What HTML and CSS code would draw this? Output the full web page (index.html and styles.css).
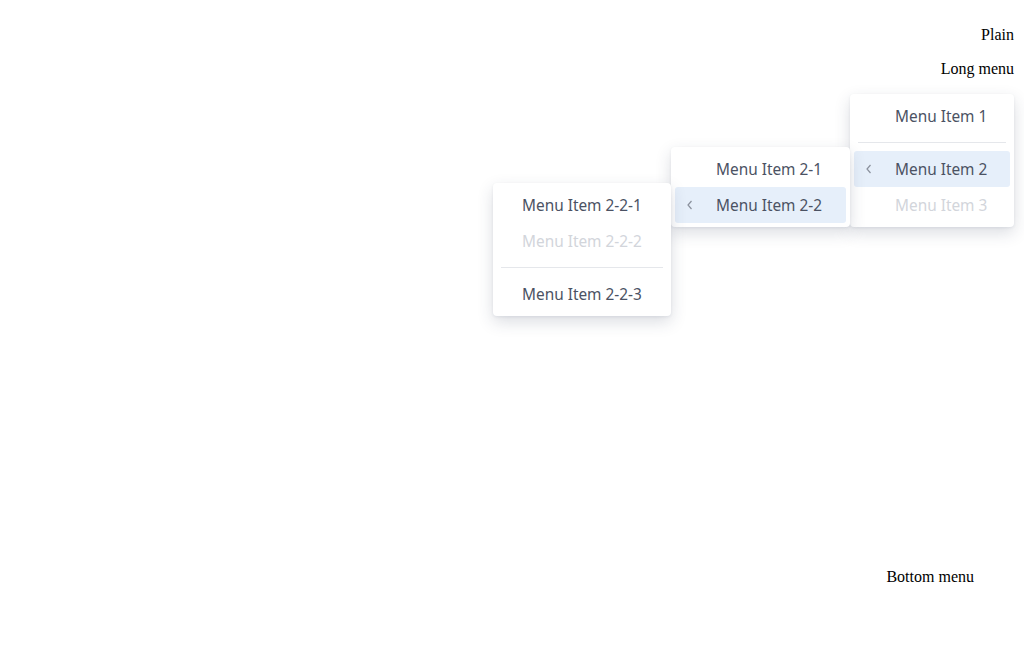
FILE: index.html
```html
<!DOCTYPE html>
<html>
<head>
<meta charset="utf-8">
<link rel="stylesheet" href="styles.css">
</head>
<body>
<div class="page">
  <div class="triggers">
    <div class="trigger trigger-plain">Plain</div>
    <div class="trigger trigger-long">Long menu</div>
  </div>
  <div class="bottom-row">
    <div class="trigger">Bottom menu</div>
  </div>
</div>

<div class="menu menu-1 has-sub">
  <div class="item">Menu Item 1</div>
  <div class="sep"></div>
  <div class="item active"><span class="chev"><svg width="8" height="10" viewBox="0 0 8 10"><path d="M5.5 1 L2 5 L5.5 9" fill="none" stroke="currentColor" stroke-width="1.2"/></svg></span>Menu Item 2</div>
  <div class="item disabled">Menu Item 3</div>
</div>

<div class="menu menu-2 has-sub">
  <div class="item">Menu Item 2-1</div>
  <div class="item active"><span class="chev"><svg width="8" height="10" viewBox="0 0 8 10"><path d="M5.5 1 L2 5 L5.5 9" fill="none" stroke="currentColor" stroke-width="1.2"/></svg></span>Menu Item 2-2</div>
</div>

<div class="menu menu-3">
  <div class="item">Menu Item 2-2-1</div>
  <div class="item disabled">Menu Item 2-2-2</div>
  <div class="sep"></div>
  <div class="item">Menu Item 2-2-3</div>
</div>
</body>
</html>
```

FILE: styles.css
```css
html, body {
  margin: 0;
  padding: 0;
  background: #fff;
}
body {
  font-family: "Liberation Serif", serif;
  font-size: 16px;
  color: #000;
}
.page {
  display: flex;
  flex-direction: column;
  height: 651px;
}
.triggers {
  display: flex;
  flex-direction: column;
  align-items: flex-end;
  padding: 26px 10px 0 0;
  gap: 16px;
}
.trigger {
  line-height: 18px;
}
.bottom-row {
  display: flex;
  justify-content: flex-end;
  padding: 0 50px 0 0;
  margin-top: 490px;
}
.menu {
  position: absolute;
  background: #fff;
  border-radius: 4px;
  padding: 4px;
  box-shadow: 0 6px 16px rgba(40, 55, 85, 0.17), 0 1px 3px rgba(40, 55, 85, 0.08);
  font-family: "Noto Sans", "Open Sans", sans-serif;
  font-size: 15.4px;
  color: #4b5263;
  display: flex;
  flex-direction: column;
}
.menu-1 { left: 850px; top: 94px; width: 156px; }
.menu-2 { left: 671px; top: 147px; width: 171px; }
.menu-3 { left: 493px; top: 183px; width: 170px; }
.item {
  height: 36px;
  display: flex;
  align-items: center;
  padding-left: 25px;
  border-radius: 3px;
  white-space: nowrap;
  position: relative;
}
.has-sub .item {
  padding-left: 41px;
}
.item.active {
  background: #e6effa;
}
.item.disabled {
  color: #d2d5db;
}
.chev {
  position: absolute;
  left: 11px;
  top: 13px;
  color: #8a909c;
  display: flex;
}
.sep {
  height: 1px;
  background: #e5e7eb;
  margin: 8px 4px;
}
```
